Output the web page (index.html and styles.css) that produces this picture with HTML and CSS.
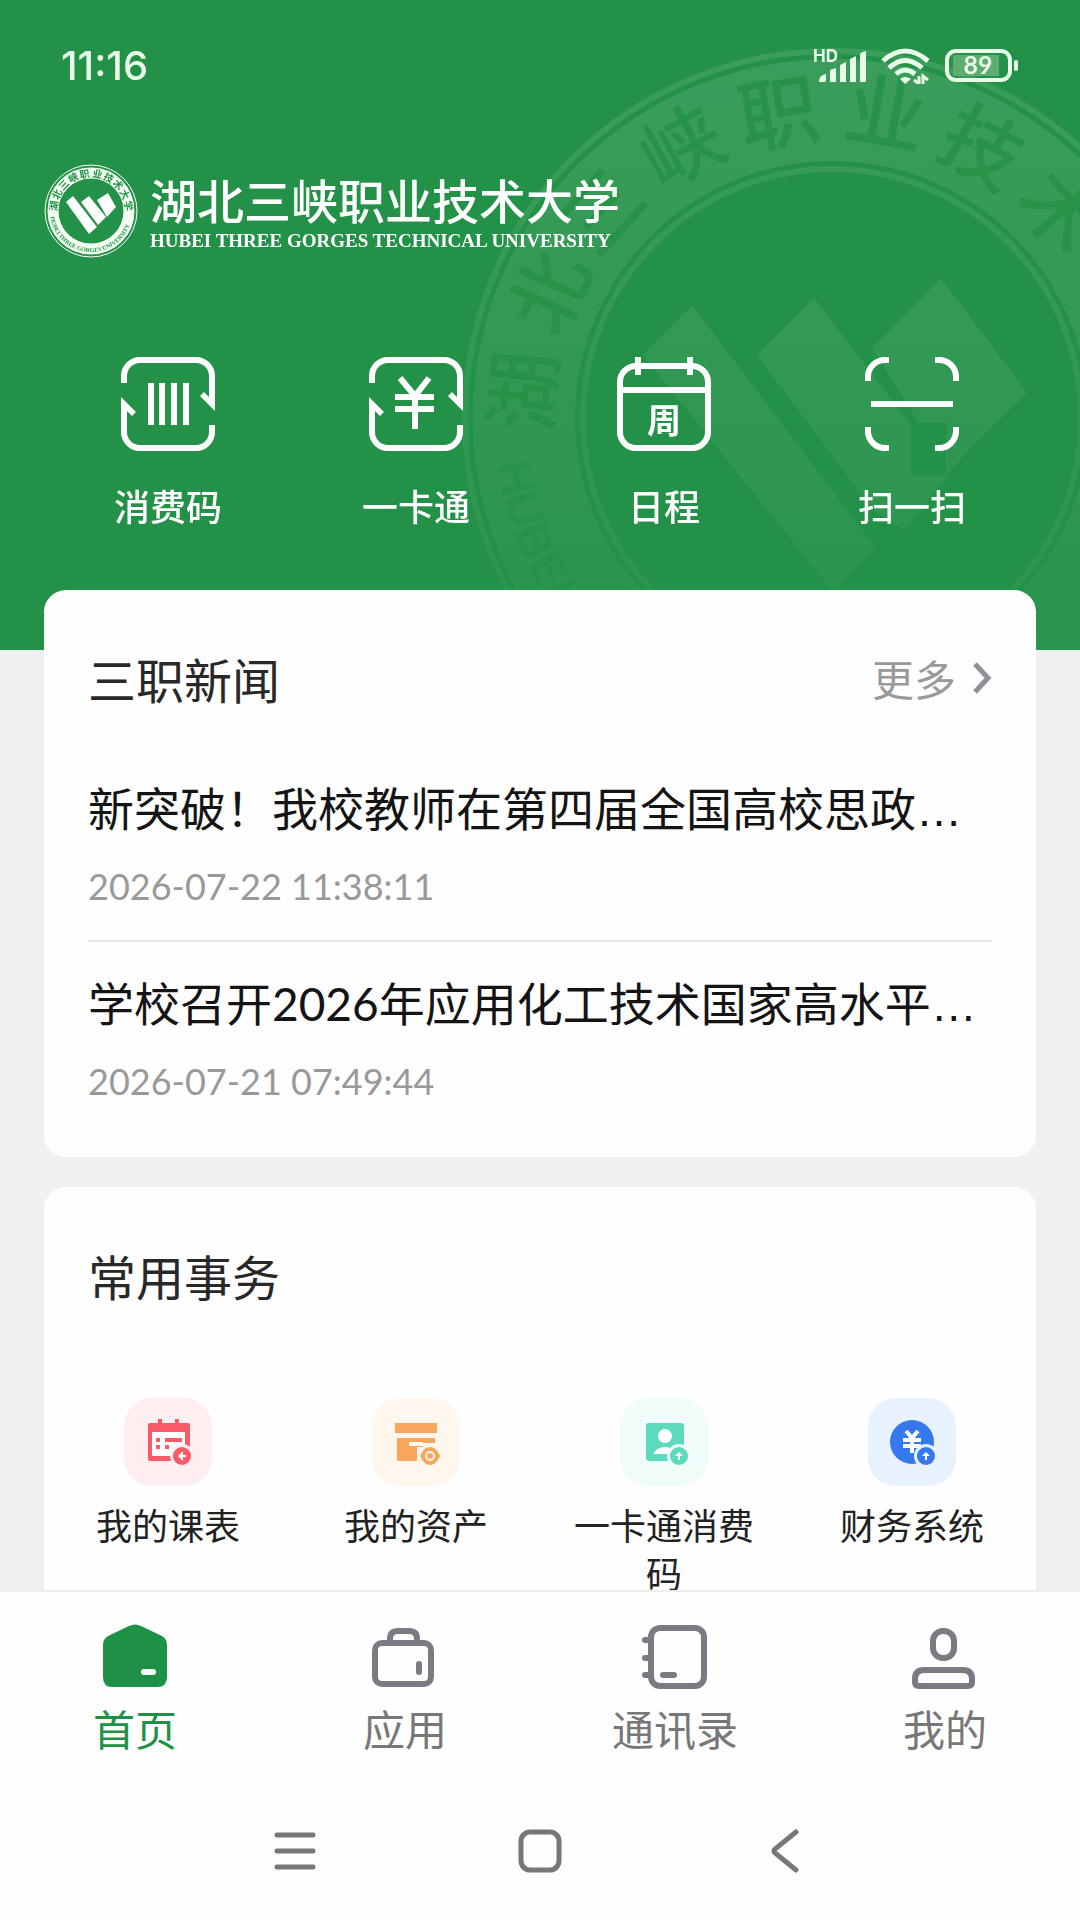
FILE: index.html
```html
<!DOCTYPE html>
<html lang="zh-CN">
<head>
<meta charset="utf-8">
<meta name="viewport" content="width=device-width, initial-scale=1">
<title>湖北三峡职业技术大学</title>
<link rel="stylesheet" href="styles.css">
</head>
<body>
<main class="content">
  <header class="hero">
    <svg class="watermark" viewBox="460 0 620 650" aria-hidden="true">
      <defs>
        <linearGradient id="fade" gradientUnits="userSpaceOnUse" x1="0" y1="46" x2="0" y2="650">
          <stop offset="0" stop-color="#fff" stop-opacity=".11"/>
          <stop offset="1" stop-color="#fff" stop-opacity=".03"/>
        </linearGradient>
        <path id="lowerArc" d="M494 418A338 338 0 0 0 1170 418"/>
      </defs>
      <g fill="none" stroke="url(#fade)">
        <circle cx="832" cy="418" r="367" stroke-width="6"/>
        <circle cx="832" cy="418" r="308" stroke-width="102"/>
        <circle cx="832" cy="418" r="249" stroke-width="6"/>
      </g>
      <g fill="url(#fade)">
        <path d="M692 305L875 547L833 592L643 355Z"/>
        <path d="M814 298L911 425V475H948L905 530L873 510L757 355Z"/>
        <path d="M941 278L1027 393L973 446L946 475V423H919L872 348Z"/>
      </g>
      <g class="ring-name">
        <text x="832" y="138" transform="rotate(-85 832 418)">湖</text>
        <text x="832" y="138" transform="rotate(-66 832 418)">北</text>
        <text x="832" y="138" transform="rotate(-48 832 418)">三</text>
        <text x="832" y="138" transform="rotate(-29 832 418)">峡</text>
        <text x="832" y="138" transform="rotate(-10 832 418)">职</text>
        <text x="832" y="138" transform="rotate(10 832 418)">业</text>
        <text x="832" y="138" transform="rotate(29 832 418)">技</text>
        <text x="832" y="138" transform="rotate(48 832 418)">术</text>
      </g>
      <text class="ring-latin"><textPath href="#lowerArc" startOffset="46">HUBEI</textPath></text>
    </svg>

    <div class="statusbar">
      <span class="clock">11:16</span>
      <span class="indicators">
        <svg width="54" height="36" viewBox="0 0 54 36" fill="#e9fbe9">
          <text class="hd" x="0" y="14">HD</text>
          <path d="M6 34Q6 27 13 26V32Q13 34 11 34ZM17 22L23 20V34H17ZM27 17L33 14V34H27ZM37 11L43 8V34H37ZM47 7Q47 4 53 3V34H47Z"/>
        </svg>
        <svg width="50" height="36" viewBox="0 0 50 36">
          <g fill="none" stroke="#e9fbe9" stroke-width="5">
            <path d="M2 13Q24 -7 47 13"/><path d="M8 20Q24 5 41 20"/><path d="M15 26Q24 18 34 26"/>
          </g>
          <path d="M19 31Q24 27 30 31L24 36Z" fill="#e9fbe9"/>
          <path d="M38 28V36L33 32M42 36V28L47 32" fill="none" stroke="#e9fbe9" stroke-width="3"/>
        </svg>
        <svg width="74" height="34" viewBox="0 0 74 34">
          <rect x="2" y="2" width="63" height="29" rx="9" fill="none" stroke="#e9fbe9" stroke-width="4"/>
          <path d="M8 6H54V27H8Z" fill="#5dad70"/>
          <rect x="69" y="11" width="4" height="11" rx="2" fill="#e9fbe9"/>
          <text class="level" x="33" y="25">89</text>
        </svg>
      </span>
    </div>

    <div class="brand">
      <svg class="seal" viewBox="0 0 94 94" aria-hidden="true">
        <defs><path id="sealArc" d="M6 47A41 41 0 0 0 88 47"/></defs>
        <circle cx="47" cy="47" r="46" fill="none" stroke="#fff" stroke-width="1"/>
        <circle cx="47" cy="47" r="38" fill="none" stroke="#f4fff4" stroke-width="11"/>
        <g class="seal-name">
          <text x="47" y="13" transform="rotate(-82 47 47)">湖</text>
          <text x="47" y="13" transform="rotate(-64 47 47)">北</text>
          <text x="47" y="13" transform="rotate(-46 47 47)">三</text>
          <text x="47" y="13" transform="rotate(-28 47 47)">峡</text>
          <text x="47" y="13" transform="rotate(-10 47 47)">职</text>
          <text x="47" y="13" transform="rotate(10 47 47)">业</text>
          <text x="47" y="13" transform="rotate(28 47 47)">技</text>
          <text x="47" y="13" transform="rotate(46 47 47)">术</text>
          <text x="47" y="13" transform="rotate(64 47 47)">大</text>
          <text x="47" y="13" transform="rotate(82 47 47)">学</text>
        </g>
        <text class="seal-latin"><textPath href="#sealArc" startOffset="6">HUBEI THREE GORGES UNIVERSITY</textPath></text>
        <path fill="#fff" d="M29 32L22 38L45 70L53 63ZM45 32L37 38L54 61L62 53ZM64 29L72 43L63 53L53 36Z"/>
      </svg>
      <div class="brand-text">
        <h1 class="brand-name">湖北三峡职业技术大学</h1>
        <p class="brand-latin">HUBEI THREE GORGES TECHNICAL UNIVERSITY</p>
      </div>
    </div>

    <div class="quick">
      <button class="quick-item" type="button">
        <svg class="quick-icon" viewBox="0 0 94 94">
          <g id="swap">
            <path d="M3 26V19A16 16 0 0 1 19 3H75A16 16 0 0 1 91 19V46"/>
            <path class="solid" d="M94 54L79 39L83 35L88 40V30H94Z"/>
          </g>
          <use href="#swap" transform="rotate(180 47 47)"/>
          <path d="M30 26V68M41 26V68M53 26V68M65 26V68"/>
        </svg>
        消费码
      </button>
      <button class="quick-item" type="button">
        <svg class="quick-icon" viewBox="0 0 94 94">
          <use href="#swap"/>
          <use href="#swap" transform="rotate(180 47 47)"/>
          <path d="M31 21L46 39L60 21M26 40H65M26 52H65M46 38V72"/>
        </svg>
        一卡通
      </button>
      <button class="quick-item" type="button">
        <svg class="quick-icon" viewBox="0 0 94 94">
          <rect x="3" y="9" width="88" height="82" rx="16"/>
          <path d="M21 0V18M73 0V18M3 33H91"/>
          <text class="week" x="47" y="76">周</text>
        </svg>
        日程
      </button>
      <button class="quick-item" type="button">
        <svg class="quick-icon" viewBox="0 0 94 94">
          <path d="M3 24V20A17 17 0 0 1 20 3H24M70 3H74A17 17 0 0 1 91 20V24M91 70V74A17 17 0 0 1 74 91H70M24 91H20A17 17 0 0 1 3 74V70M6 47H88"/>
        </svg>
        扫一扫
      </button>
    </div>
  </header>

  <section class="card news">
    <div class="card-head">
      <h2 class="card-title">三职新闻</h2>
      <a class="more" href="#news">更多
        <svg width="20" height="34" viewBox="0 0 20 34"><path d="M3 3L16 17L3 31" fill="none" stroke="#8c9298" stroke-width="5"/></svg>
      </a>
    </div>
    <ul class="news-list">
      <li class="news-item">
        <a class="news-title" href="#n1">新突破！我校教师在第四届全国高校思政<span class="dots">…</span></a>
        <time class="news-time">2026-07-22 11:38:11</time>
      </li>
      <li class="news-item">
        <a class="news-title" href="#n2">学校召开2026年应用化工技术国家高水平<span class="dots">…</span></a>
        <time class="news-time">2026-07-21 07:49:44</time>
      </li>
    </ul>
  </section>

  <section class="card services">
    <div class="card-head">
      <h2 class="card-title">常用事务</h2>
    </div>
    <div class="service-grid">
      <a class="service" href="#timetable">
        <svg class="tile tile-red" viewBox="0 0 88 88">
          <path fill="#fa5a66" d="M36 21V27M26 25H34V21H38V25H51V21H55V25H64Q66 25 66 27V63H26Q24 63 24 61V27Q24 25 26 25Z"/>
          <path fill="#fff" d="M28 34H61V58H28Z"/>
          <path fill="#fa5a66" d="M32 40H36V44H32ZM41 40H58V44H41ZM32 47H36V51H32ZM41 47H45V51H41Z"/>
          <circle cx="58" cy="58" r="12" fill="#ffeef0"/>
          <circle cx="58" cy="58" r="9" fill="#fa5a66"/>
          <path fill="#fff" d="M54 58L59 53V57H62V59H59V63Z"/>
        </svg>
        <span class="service-name">我的课表</span>
      </a>
      <a class="service" href="#assets">
        <svg class="tile tile-orange" viewBox="0 0 88 88">
          <path fill="#faa55c" d="M23 25H65V35H23ZM25 40H63V45H51V49H45V63H27Q25 63 25 61Z"/>
          <path fill="#fff6ee" d="M37 44H51V48H37Z"/>
          <ellipse cx="58" cy="58" rx="13" ry="11" fill="#fff6ee"/>
          <path fill="#faa55c" d="M48 58Q52 49 58 49T68 58Q64 67 58 67T48 58Z"/>
          <circle cx="58" cy="58" r="4" fill="none" stroke="#fff6ee" stroke-width="2"/>
        </svg>
        <span class="service-name">我的资产</span>
      </a>
      <a class="service" href="#paycode">
        <svg class="tile tile-green" viewBox="0 0 88 88">
          <rect x="26" y="25" width="38" height="38" rx="3" fill="#5cdabd"/>
          <circle cx="45" cy="38" r="7" fill="#fff"/>
          <path fill="#fff" d="M33 56Q37 49 45 49T56 56Z"/>
          <circle cx="59" cy="58" r="12" fill="#f0fcf9"/>
          <circle cx="59" cy="58" r="9" fill="#5cdabd"/>
          <path fill="#fff" d="M59 54L63 58H60V62H58V58H55Z"/>
        </svg>
        <span class="service-name">一卡通消费码</span>
      </a>
      <a class="service" href="#finance">
        <svg class="tile tile-blue" viewBox="0 0 88 88">
          <circle cx="44" cy="44" r="22" fill="#3579ed"/>
          <path d="M38 33L44 40L50 33M35 42H53M35 48H53M44 40V55" fill="none" stroke="#fff" stroke-width="4"/>
          <circle cx="58" cy="58" r="12" fill="#e8f1fe"/>
          <circle cx="58" cy="58" r="9" fill="#3579ed"/>
          <path fill="#fff" d="M58 54L62 58H59V62H57V58H54Z"/>
        </svg>
        <span class="service-name">财务系统</span>
      </a>
    </div>
  </section>
</main>

<footer class="bottom">
  <nav class="tabs">
    <a class="tab tab-active" href="#home">
      <svg class="tab-icon" viewBox="0 0 66 66">
        <path fill="#1f9146" d="M27 3Q33 0 39 3L60 13Q65 16 65 22V54Q65 64 55 64H10Q1 64 1 54V22Q1 16 6 13Z"/>
        <rect x="39" y="46" width="15" height="6" rx="3" fill="#fff"/>
      </svg>
      首页
    </a>
    <a class="tab" href="#apps">
      <svg class="tab-icon" viewBox="0 0 66 66">
        <rect x="3" y="20" width="56" height="41" rx="7"/>
        <path d="M18 20V16Q18 8 26 8H37Q45 8 45 16V20"/>
        <path class="round" d="M47 41V49"/>
      </svg>
      应用
    </a>
    <a class="tab" href="#contacts">
      <svg class="tab-icon" viewBox="0 0 66 66">
        <rect x="9" y="5" width="53" height="58" rx="9"/>
        <path class="round" d="M3 17H8M3 35H8M3 52H8M21 52H32"/>
      </svg>
      通讯录
    </a>
    <a class="tab" href="#me">
      <svg class="tab-icon" viewBox="0 0 66 66">
        <rect x="21" y="8" width="21" height="27" rx="10"/>
        <path d="M3 59V56Q3 47 12 47H51Q60 47 60 56V59Q60 63 56 63H7Q3 63 3 59Z"/>
      </svg>
      我的
    </a>
  </nav>
  <div class="sysnav">
    <button class="sys" type="button" aria-label="最近任务">
      <svg width="44" height="44" viewBox="0 0 44 44"><path d="M4 6H40M4 22H40M4 38H40"/></svg>
    </button>
    <button class="sys" type="button" aria-label="主屏幕">
      <svg width="44" height="44" viewBox="0 0 44 44"><rect x="3" y="3" width="38" height="38" rx="9"/></svg>
    </button>
    <button class="sys" type="button" aria-label="返回">
      <svg width="44" height="44" viewBox="0 0 44 44"><path d="M33 3L12 20Q10 22 12 24L33 41"/></svg>
    </button>
  </div>
</footer>
</body>
</html>
```
FILE: styles.css
```css
* { box-sizing: border-box; margin: 0; padding: 0; }

body {
  display: flex;
  flex-direction: column;
  height: 100vh;
  background: #f0f0f0;
  color: #222;
  font-family: "Noto Sans CJK SC", sans-serif;
}

a { color: inherit; text-decoration: none; }
button { border: 0; background: none; color: inherit; font: inherit; }
svg { display: block; flex: none; }
ul { list-style: none; }

.content {
  flex: 1;
  min-height: 0;
  overflow-y: auto;
  scrollbar-width: none;
}

/* Green header */
.hero {
  position: relative;
  overflow: hidden;
  padding-bottom: 120px;
  background: #239147;
  color: #fff;
}
.watermark { position: absolute; top: 0; right: 0; width: 620px; height: 650px; }
.ring-name { fill: #239147; font-size: 80px; font-weight: 500; text-anchor: middle; opacity: .8; }
.ring-latin { fill: #239147; font: 700 48px "Liberation Sans", sans-serif; opacity: .6; }

.statusbar {
  position: relative;
  display: flex;
  align-items: center;
  justify-content: space-between;
  height: 132px;
  padding: 0 61px;
  color: #e9fbe9;
}
.clock { font: 500 40px/48px Inter, sans-serif; }
.indicators { display: flex; align-items: center; gap: 14px; }
.hd { font: 700 17px Inter, sans-serif; }
.level { fill: #e9fbe9; font: 700 25px Lato, sans-serif; text-anchor: middle; }

.brand {
  position: relative;
  display: flex;
  align-items: center;
  gap: 12px;
  margin-top: 31px;
  padding: 0 44px;
}
.seal { width: 94px; height: 96px; }
.seal-name { fill: #239147; font-size: 10px; font-weight: 700; text-anchor: middle; }
.seal-latin { fill: #239147; font: 700 6px "Liberation Serif", serif; }
.brand-name { font-size: 47px; font-weight: 500; line-height: 60px; }
.brand-latin { font: 700 19px/24px "Liberation Serif", serif; white-space: nowrap; }

.quick {
  position: relative;
  display: grid;
  grid-template-columns: repeat(4, 1fr);
  margin-top: 98px;
  padding: 0 44px;
}
.quick-item {
  display: flex;
  flex-direction: column;
  align-items: center;
  gap: 29px;
  font-size: 36px;
  font-weight: 500;
  line-height: 50px;
}
.quick-icon { width: 94px; height: 94px; fill: none; stroke: #fff; stroke-width: 6; }
.quick-icon .solid, .quick-icon .week { fill: #fff; stroke: none; }
.week { font-size: 34px; font-weight: 700; text-anchor: middle; }

/* Cards */
.card {
  position: relative;
  margin: 0 44px 30px;
  padding: 55px 44px 54px;
  border-radius: 22px;
  background: #fefefe;
}
.news { margin-top: -60px; }
.card-head { display: flex; align-items: center; justify-content: space-between; }
.card-title { font-size: 48px; font-weight: 400; line-height: 66px; color: #282828; }
.more {
  display: flex;
  align-items: center;
  gap: 16px;
  color: #999;
  font-size: 42px;
  line-height: 66px;
}

.news-list { padding-top: 36px; }
.news-item {
  display: flex;
  flex-direction: column;
  gap: 24px;
  padding: 32px 0;
}
.news-item + .news-item { border-top: 2px solid #e6e6e6; padding-bottom: 0; }
.news-title {
  overflow: hidden;
  color: #141414;
  font-family: Lato, "Noto Sans CJK SC", sans-serif;
  font-size: 46px;
  line-height: 60px;
  white-space: nowrap;
}
.dots { font-family: "Liberation Sans", sans-serif; }
.news-time { color: #999; font: 36px/44px Lato, sans-serif; }

.service-grid {
  display: grid;
  grid-template-columns: repeat(4, 1fr);
  margin: 90px -44px 0;
}
.service {
  display: flex;
  flex-direction: column;
  align-items: center;
  gap: 14px;
  padding: 0 24px;
}
.tile { width: 88px; height: 88px; border-radius: 28px; }
.tile-red { background: #ffeef0; }
.tile-orange { background: #fff6ee; }
.tile-green { background: #f0fcf9; }
.tile-blue { background: #e8f1fe; }
.service-name { font-size: 36px; line-height: 48px; text-align: center; }

/* Bottom bars */
.bottom { border-top: 2px solid #eee; background: #fefefe; }
.tabs {
  display: grid;
  grid-template-columns: repeat(4, 1fr);
  padding-top: 31px;
}
.tab {
  display: flex;
  flex-direction: column;
  align-items: center;
  gap: 14px;
  color: #777;
  font-size: 42px;
  line-height: 50px;
}
.tab-active { color: #1f9146; }
.tab-icon { width: 66px; height: 66px; fill: none; stroke: #7b7982; stroke-width: 6; }
.tab-active .tab-icon { stroke: none; }
.round { stroke-linecap: round; }

.sysnav {
  display: grid;
  grid-template-columns: repeat(3, 1fr);
  align-items: center;
  justify-items: center;
  width: 68%;
  height: 138px;
  margin: 29px auto 0;
}
.sys { fill: none; stroke: #777; stroke-width: 5; stroke-linecap: round; }
```
